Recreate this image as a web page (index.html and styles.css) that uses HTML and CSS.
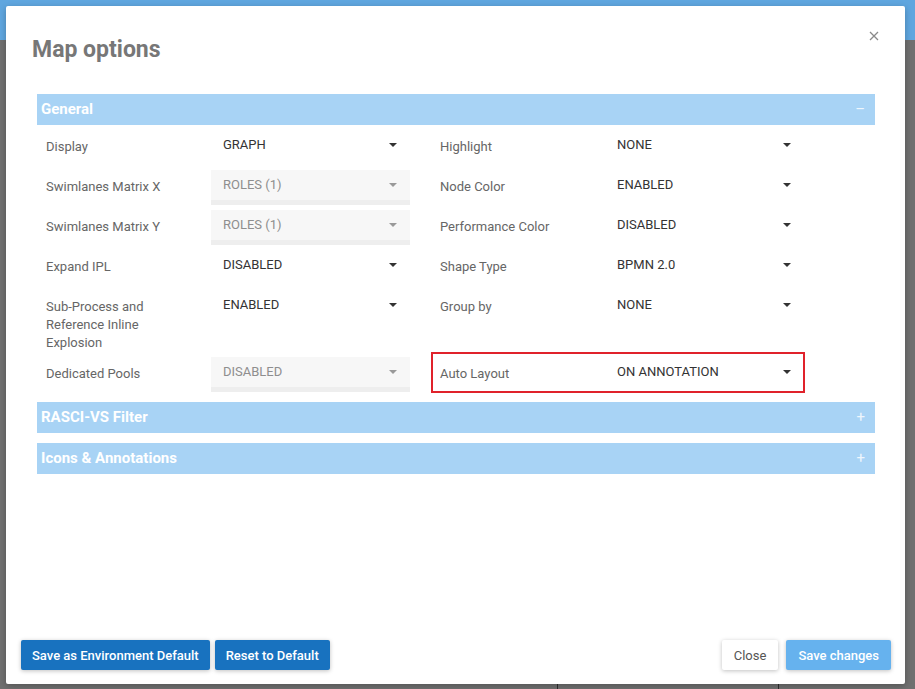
FILE: index.html
```html
<!DOCTYPE html>
<html>
<head>
<meta charset="utf-8">
<link rel="stylesheet" href="styles.css">
</head>
<body>
<div class="page">
  <div class="appbar"></div>
  <div class="appbody">
    <div class="seam seam-a"></div>
    <div class="seam seam-b"></div>
  </div>
  <div class="modal">
    <div class="modal-header">
      <h1 class="title">Map options</h1>
      <span class="close-x"><svg width="10" height="10" viewBox="0 0 10 10"><path d="M1 1L9 9M9 1L1 9" stroke="#8a8a8a" stroke-width="1.3" fill="none"/></svg></span>
    </div>
    <div class="modal-body">
      <div class="panel">
        <div class="panel-head"><span>General</span><span class="sign">–</span></div>
        <div class="panel-content">
          <div class="cell"><div class="label">Display</div><div class="select"><span>GRAPH</span><i class="caret"></i></div></div>
          <div class="cell"><div class="label">Highlight</div><div class="select"><span>NONE</span><i class="caret"></i></div></div>

          <div class="cell"><div class="label">Swimlanes Matrix X</div><div class="select disabled"><span>ROLES (1)</span><i class="caret"></i></div></div>
          <div class="cell"><div class="label">Node Color</div><div class="select"><span>ENABLED</span><i class="caret"></i></div></div>

          <div class="cell"><div class="label">Swimlanes Matrix Y</div><div class="select disabled"><span>ROLES (1)</span><i class="caret"></i></div></div>
          <div class="cell"><div class="label">Performance Color</div><div class="select"><span>DISABLED</span><i class="caret"></i></div></div>

          <div class="cell"><div class="label">Expand IPL</div><div class="select"><span>DISABLED</span><i class="caret"></i></div></div>
          <div class="cell"><div class="label">Shape Type</div><div class="select"><span>BPMN 2.0</span><i class="caret"></i></div></div>

          <div class="cell"><div class="label">Sub-Process and Reference Inline Explosion</div><div class="select"><span>ENABLED</span><i class="caret"></i></div></div>
          <div class="cell"><div class="label">Group by</div><div class="select"><span>NONE</span><i class="caret"></i></div></div>

          <div class="cell"><div class="label">Dedicated Pools</div><div class="select disabled"><span>DISABLED</span><i class="caret"></i></div></div>
          <div class="cell marked"><div class="label">Auto Layout</div><div class="select"><span>ON ANNOTATION</span><i class="caret"></i></div></div>
        </div>
      </div>
      <div class="panel collapsed">
        <div class="panel-head"><span>RASCI-VS Filter</span><span class="sign">+</span></div>
      </div>
      <div class="panel collapsed">
        <div class="panel-head"><span>Icons &amp; Annotations</span><span class="sign">+</span></div>
      </div>
    </div>
    <div class="modal-footer">
      <div class="group left">
        <button class="btn primary">Save as Environment Default</button>
        <button class="btn primary">Reset to Default</button>
      </div>
      <div class="group right">
        <button class="btn plain">Close</button>
        <button class="btn light">Save changes</button>
      </div>
    </div>
  </div>
</div>
</body>
</html>
```

FILE: styles.css
```css
*, *::before, *::after { box-sizing: border-box; }
html, body { margin: 0; padding: 0; }
body {
  width: 915px;
  height: 689px;
  overflow: hidden;
  font-family: Roboto, "Liberation Sans", Arial, sans-serif;
  background: #707070;
}
.page {
  position: relative;
  width: 915px;
  height: 689px;
  display: flex;
  flex-direction: column;
}
.appbar {
  height: 40px;
  background: #5fa6df;
}
.appbody {
  flex: 1;
  background: #707070;
  position: relative;
}
.seam {
  position: absolute;
  bottom: 0;
  width: 1px;
  height: 6px;
  background: #2e2e2e;
}
.seam-a { left: 557px; }
.seam-b { left: 778px; }

.modal {
  position: absolute;
  top: 6px;
  left: 6px;
  width: 899px;
  height: 678px;
  background: #fff;
  border-radius: 2px;
  display: flex;
  flex-direction: column;
  box-shadow: 0 2px 6px rgba(0,0,0,0.25);
}
.modal-header {
  position: relative;
  padding: 30px 26px 0 26px;
}
.title {
  margin: 0;
  font-size: 23px;
  line-height: 27px;
  font-weight: 700;
  color: #777;
}
.close-x {
  position: absolute;
  top: 25px;
  right: 26px;
  width: 10px;
  height: 10px;
  display: flex;
}
.modal-body {
  flex: 1;
  margin-top: 31px;
  padding: 0 30px 0 31px;
}
.panel { margin-bottom: 10px; }
.panel-head {
  height: 31px;
  background: #a8d3f5;
  color: #fff;
  font-weight: 700;
  font-size: 15px;
  padding: 0 10px 1px 4px;
  display: flex;
  align-items: center;
  justify-content: space-between;
}
.sign {
  font-weight: 400;
  font-size: 15px;
  color: #eef6fd;
}
.panel-content {
  display: grid;
  grid-template-columns: 374px 374px;
  column-gap: 20px;
  row-gap: 5px;
  padding: 5px 0 0 0;
}
.cell {
  display: flex;
  position: relative;
  align-items: flex-start;
}
.label {
  width: 174px;
  padding: 8px 30px 0 9px;
  font-size: 13px;
  line-height: 18px;
  color: #666;
}
.select {
  width: 199px;
  height: 35px;
  display: flex;
  justify-content: space-between;
  align-items: flex-start;
  padding: 0 13px 0 12px;
  font-size: 13px;
  line-height: 30px;
  color: #333;
}
.select.disabled {
  background: #f7f7f7;
  border-bottom: 5px solid #eeeeee;
  color: #8e8e8e;
}
.caret {
  margin-top: 13px;
  width: 0;
  height: 0;
  border-left: 4px solid transparent;
  border-right: 4px solid transparent;
  border-top: 4px solid #333;
}
.select.disabled .caret { border-top-color: #999; }
.marked::after {
  content: "";
  position: absolute;
  left: 0;
  top: -5px;
  width: 374px;
  height: 41px;
  border: 2px solid #e0222b;
  pointer-events: none;
}
.modal-footer {
  display: flex;
  justify-content: space-between;
  padding: 0 14px 14px 15px;
}
.group { display: flex; }
.group.left { gap: 5px; }
.group.right { gap: 8px; }
.btn {
  height: 30px;
  border: 0;
  border-radius: 2px;
  font-family: Roboto, "Liberation Sans", Arial, sans-serif;
  font-size: 13px;
  font-weight: 500;
  padding: 0 11px;
  box-shadow: 0 1px 4px rgba(0,0,0,0.25);
  cursor: pointer;
}
.btn.primary { background: #1872bf; color: #fff; }
.btn.plain { background: #fff; color: #555; font-weight: 400; padding: 0 12px; }
.btn.light { background: #66b2ee; color: #fff; padding: 0 12px; }
```
